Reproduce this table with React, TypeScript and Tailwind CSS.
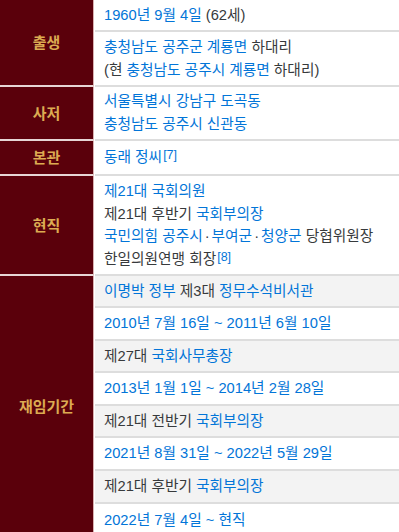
import React from "react";

const L = ({ children }: { children: React.ReactNode }) => (
  <span className="text-[#0275d8]">{children}</span>
);
const Sup = ({ children }: { children: React.ReactNode }) => (
  <sup className="text-[#0275d8] text-[12.5px] relative -top-[3px] ml-[1px]">{children}</sup>
);
const Dot = () => <span className="mx-[2px]">·</span>;

function Cell({
  h,
  gray,
  children,
  last,
}: {
  h: string;
  gray?: boolean;
  children: React.ReactNode;
  last?: boolean;
}) {
  return (
    <div
      className={`${h} flex flex-col justify-center px-[9px] whitespace-nowrap ${
        last ? "" : "border-b-2 border-[#dddddd]"
      } ${gray ? "bg-[#f3f3f3]" : "bg-white"}`}
    >
      {children}
    </div>
  );
}

function Group({
  label,
  children,
  last,
}: {
  label: string;
  children: React.ReactNode;
  last?: boolean;
}) {
  return (
    <div className="flex">
      <div
        className={`w-[94px] shrink-0 bg-[#5a000b] flex items-center justify-center font-bold text-[#dcab52] text-[15px] ${
          last ? "" : "border-b-2 border-[#e6d5d5]"
        } border-r border-r-[#d8b0b0]`}
      >
        {label}
      </div>
      <div className="flex-1 min-w-0 flex flex-col border-l border-l-white">{children}</div>
    </div>
  );
}

export default function App() {
  return (
    <div
      className="w-[399px] h-[532px] overflow-hidden bg-white text-[14.7px] leading-[23px] text-[#373a3c]"
      style={{ fontFamily: '"Liberation Sans", "Noto Sans CJK KR", sans-serif' }}
    >
      <Group label="출생">
        <Cell h="h-[32px]">
          <div>
            <L>1960년 9월 4일</L> (62세)
          </div>
        </Cell>
        <Cell h="h-[55px]">
          <div>
            <L>충청남도 공주군 계룡면</L> 하대리
          </div>
          <div>
            (현 <L>충청남도 공주시 계룡면</L> 하대리)
          </div>
        </Cell>
      </Group>
      <Group label="사저">
        <Cell h="h-[54px]">
          <div>
            <L>서울특별시 강남구 도곡동</L>
          </div>
          <div>
            <L>충청남도 공주시 신관동</L>
          </div>
        </Cell>
      </Group>
      <Group label="본관">
        <Cell h="h-[35px]">
          <div>
            <L>동래 정씨</L>
            <Sup>[7]</Sup>
          </div>
        </Cell>
      </Group>
      <Group label="현직">
        <Cell h="h-[100px]">
          <div className="leading-[22.5px]">
            <L>제21대 국회의원</L>
          </div>
          <div className="leading-[22.5px]">
            제21대 후반기 <L>국회부의장</L>
          </div>
          <div className="leading-[22.5px]">
            <L>국민의힘 공주시</L>
            <Dot />
            <L>부여군</L>
            <Dot />
            <L>청양군</L> 당협위원장
          </div>
          <div className="leading-[22.5px]">
            한일의원연맹 회장<Sup>[8]</Sup>
          </div>
        </Cell>
      </Group>
      <Group label="재임기간" last>
        <Cell h="h-[32px]" gray>
          <div>
            <L>이명박 정부</L> 제3대 <L>정무수석비서관</L>
          </div>
        </Cell>
        <Cell h="h-[33px]">
          <div>
            <L>2010년 7월 16일 ~ 2011년 6월 10일</L>
          </div>
        </Cell>
        <Cell h="h-[32px]" gray>
          <div>
            제27대 <L>국회사무총장</L>
          </div>
        </Cell>
        <Cell h="h-[33px]">
          <div>
            <L>2013년 1월 1일 ~ 2014년 2월 28일</L>
          </div>
        </Cell>
        <Cell h="h-[32px]" gray>
          <div>
            제21대 전반기 <L>국회부의장</L>
          </div>
        </Cell>
        <Cell h="h-[33px]">
          <div>
            <L>2021년 8월 31일 ~ 2022년 5월 29일</L>
          </div>
        </Cell>
        <Cell h="h-[33px]" gray>
          <div>
            제21대 후반기 <L>국회부의장</L>
          </div>
        </Cell>
        <Cell h="h-[33px]" last>
          <div>
            <L>2022년 7월 4일 ~ 현직</L>
          </div>
        </Cell>
      </Group>
    </div>
  );
}
